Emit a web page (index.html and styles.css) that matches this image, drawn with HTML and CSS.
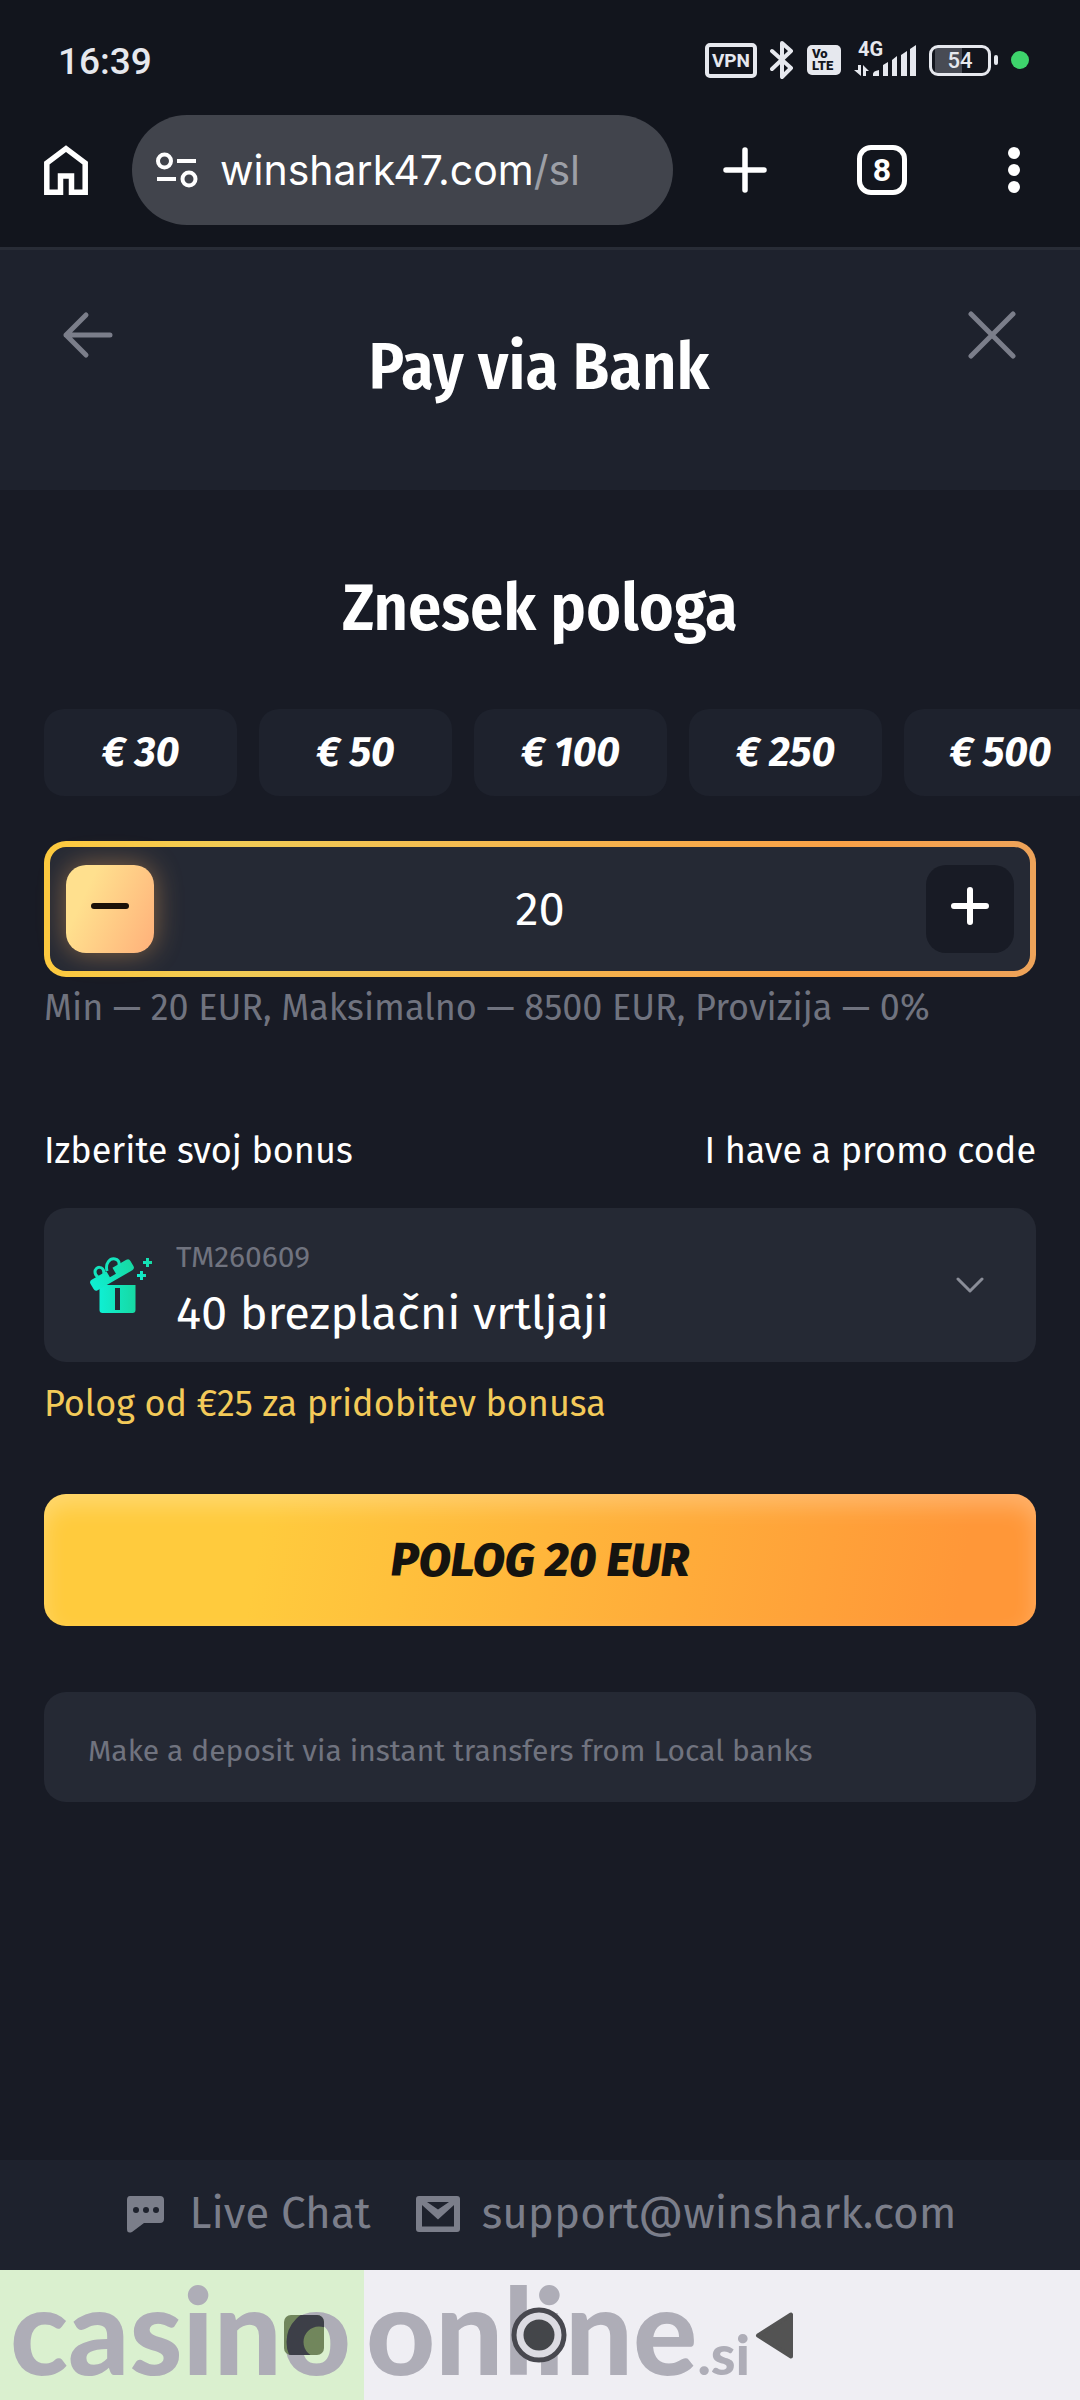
FILE: index.html
```html
<!DOCTYPE html>
<html lang="sl">
<head>
<meta charset="utf-8">
<meta name="viewport" content="width=device-width, initial-scale=1">
<title>Pay via Bank</title>
<link rel="stylesheet" href="styles.css">
</head>
<body>
<div class="chrome">
  <div class="status">
    <time class="clock">16:39</time>
    <div class="indicators">
      <span class="vpn">VPN</span>
      <svg width="24" height="40" viewBox="0 0 24 40" fill="none" stroke="#e6e8ee" stroke-width="4" stroke-linejoin="round" stroke-linecap="round"><path d="M2 11 21 28 12 37V3l9 8L2 29"/></svg>
      <span class="volte"><span>Vo</span><span>LTE</span></span>
      <span class="signal">
        <span class="net">4G</span>
        <svg width="62" height="32" viewBox="0 0 62 32" fill="#e6e8ee"><path d="M4 21h3v11L0 26h4zM9 32V21l6 6h-3v5zM19 30q0-3 6-4v6h-6zM29 21l5-3v14h-5zM38 16l5-4v20h-5zM47 11l6-4v25h-6zM56 5l6-4v31h-6z"/></svg>
      </span>
      <span class="battery"><span class="cell">54</span><span class="nub"></span></span>
      <span class="dot"></span>
    </div>
  </div>
  <div class="toolbar">
    <button class="icon-btn" aria-label="Home"><svg width="44" height="50" viewBox="0 0 44 50" fill="none" stroke="#fff" stroke-width="5.5"><path d="M2.8 47.2V18L22 3.6 41.2 18v29.200H27.500V31h-11v16.200z"/></svg></button>
    <div class="address">
      <svg width="42" height="36" viewBox="0 0 42 36" fill="none" stroke="#fff" stroke-width="4"><circle cx="8.500" cy="9" r="6.500"/><circle cx="33" cy="27" r="6.500"/><path d="M21 9h19M1 27h19"/></svg>
      <span class="url">winshark47.com<span class="path">/sl</span></span>
    </div>
    <div class="actions">
      <button class="icon-btn" aria-label="New tab"><svg width="44" height="46" viewBox="0 0 44 46" stroke="#fff" stroke-width="5.500" stroke-linecap="round"><path d="M3 23h38M22 3v40"/></svg></button>
      <button class="tabs" aria-label="Tabs">8</button>
      <button class="icon-btn" aria-label="Menu"><svg width="34" height="48" viewBox="0 0 34 48" fill="#fff"><circle cx="17" cy="7" r="6"/><circle cx="17" cy="24" r="6"/><circle cx="17" cy="41" r="6"/></svg></button>
    </div>
  </div>
</div>

<header class="header">
  <button class="icon-btn" aria-label="Back"><svg width="52" height="48" viewBox="0 0 52 48" fill="none" stroke="#7b7e8a" stroke-width="5" stroke-linecap="round" stroke-linejoin="round"><path d="M48 24H4M24 4 4 24l20 20"/></svg></button>
  <h1 class="title">Pay via Bank</h1>
  <button class="icon-btn" aria-label="Close"><svg width="48" height="48" viewBox="0 0 48 48" stroke="#7b7e8a" stroke-width="5" stroke-linecap="round"><path d="M3 3l42 42M45 3 3 45"/></svg></button>
</header>

<main class="main">
  <h2 class="title">Znesek pologa</h2>
  <div class="chips">
    <button class="chip">€ 30</button>
    <button class="chip">€ 50</button>
    <button class="chip">€ 100</button>
    <button class="chip">€ 250</button>
    <button class="chip">€ 500</button>
  </div>
  <div class="amount">
    <button class="step step-minus" aria-label="Manj"><svg width="40" height="40" viewBox="0 0 40 40" stroke="#1b1108" stroke-width="6" stroke-linecap="round"><path d="M4 20h32"/></svg></button>
    <input class="value" type="text" inputmode="numeric" value="20" aria-label="Znesek pologa">
    <button class="step" aria-label="Več"><svg width="40" height="40" viewBox="0 0 40 40" stroke="#fff" stroke-width="6" stroke-linecap="round"><path d="M4 20h32M20 4v32"/></svg></button>
  </div>
  <p class="text hint">Min — 20 EUR, Maksimalno — 8500 EUR, Provizija — 0%</p>
  <div class="text bonus-head">
    <label for="bonus">Izberite svoj bonus</label>
    <a class="promo" href="#promo">I have a promo code</a>
  </div>
  <div class="bonus">
    <svg width="62" height="56" viewBox="0 0 62 56">
      <defs><linearGradient id="mint" x1="0" x2="1"><stop offset="0" stop-color="#0fefd3"/><stop offset="1" stop-color="#17d9a3"/></linearGradient></defs>
      <g fill="url(#mint)">
        <path d="M9.500 28h36v25a3 3 0 0 1-3 3h-30a3 3 0 0 1-3-3zm15.500 3v22h5V31z"/>
        <path transform="translate(22 18) rotate(-30)" d="M-20-6h17v7h7v-7h16a3 3 0 0 1 3 3v6a3 3 0 0 1-3 3h-40a3 3 0 0 1-3-3v-6a3 3 0 0 1 3-3z"/>
        <path d="M56 1h3v3h3v3h-3v3h-3V7h-3V4h3zM50 14h3v3h3v3h-3v3h-3v-3h-3v-3h3z"/>
      </g>
      <path d="M14 17C14 8 5 9 5 15q0 3 3 5M17 14C15 6 20 1 25 2q5 1 4 7" fill="none" stroke="#14e3bd" stroke-width="3"/>
    </svg>
    <div class="bonus-body">
      <span class="code">TM260609</span>
      <select class="bonus-select" id="bonus"><option>40 brezplačni vrtljaji</option></select>
    </div>
    <svg width="28" height="16" viewBox="0 0 28 16" fill="none" stroke="#8a8d98" stroke-width="3" stroke-linecap="round" stroke-linejoin="round"><path d="M2 2l12 12L26 2"/></svg>
  </div>
  <p class="text warning">Polog od €25 za pridobitev bonusa</p>
  <button class="submit">POLOG 20 EUR</button>
  <p class="info">Make a deposit via instant transfers from Local banks</p>
</main>

<footer class="footer">
  <a class="contact" href="#chat"><svg width="44" height="38" viewBox="0 0 44 38"><path fill="#7b7e8a" d="M7 1h30a4 4 0 0 1 4 4v19a4 4 0 0 1-4 4H21L9 37q-5 2-5-3V5q0-4 3-4z"/><g fill="#1e222d"><circle cx="13" cy="15" r="3"/><circle cx="23" cy="15" r="3"/><circle cx="33" cy="15" r="3"/></g></svg>Live Chat</a>
  <a class="contact" href="mailto:support@winshark.com"><svg width="44" height="38" viewBox="0 0 44 38"><rect x="0" y="1" width="44" height="36" rx="3" fill="#7b7e8a"/><path fill="#1e222d" d="M11 7h22L22 14.500zM6 10l16 14.500L38 10v21.500H6z"/></svg>support@winshark.com</a>
</footer>

<nav class="system">
  <div class="watermark"><span class="casino">casino</span><span class="online">online<span class="si">.si</span></span></div>
  <button class="icon-btn" aria-label="Recent"><svg width="58" height="58" viewBox="0 0 58 58"><defs><clipPath id="sq"><rect x="8" y="8" width="40" height="40" rx="7"/></clipPath></defs><g clip-path="url(#sq)"><rect width="58" height="58" fill="#71865c"/><circle cx="43" cy="35" r="24" fill="none" stroke="#3d3f48" stroke-width="17"/></g></svg></button>
  <button class="icon-btn" aria-label="Home screen"><svg width="58" height="58" viewBox="0 0 58 58"><circle cx="28" cy="28" r="25" fill="#dcdbe2" stroke="#48484f" stroke-width="5"/><circle cx="28" cy="28" r="15.500" fill="#44464a"/></svg></button>
  <button class="icon-btn" aria-label="Go back"><svg width="58" height="58" viewBox="0 0 58 58"><path d="M12 28.500 45 7.500v42z" fill="#535353" stroke="#535353" stroke-width="4" stroke-linejoin="round"/></svg></button>
</nav>
</body>
</html>
```
FILE: styles.css
```css
* { box-sizing: border-box; }

body {
  margin: 0;
  min-height: 100vh;
  display: flex;
  flex-direction: column;
  overflow-x: hidden;
  background: #181b25;
  color: #fff;
  font-family: "Fira Sans", "Noto Sans", sans-serif;
}

h1, h2, p { margin: 0; }
a { color: inherit; text-decoration: none; }
svg { display: block; flex: none; }

button {
  border: 0;
  padding: 0;
  background: none;
  color: inherit;
  font: inherit;
  flex: none;
}

.icon-btn { display: block; }

/* Device status bar and browser toolbar */
.chrome {
  background: #12151d;
  border-bottom: 3px solid #282c36;
  font-family: Roboto, sans-serif;
}

.status {
  display: flex;
  justify-content: space-between;
  align-items: center;
  height: 115px;
  padding: 0 51px 0 58px;
}

.clock { font-size: 37px; font-weight: 500; line-height: 44px; color: #e6e8ee; padding-top: 8px; }
.indicators { display: flex; align-items: center; gap: 13px; color: #e6e8ee; padding-top: 5px; }

.vpn {
  width: 52px;
  border: 4px solid #e6e8ee;
  border-radius: 5px;
  font-size: 19px;
  font-weight: 700;
  line-height: 27px;
  text-align: center;
}

.volte {
  display: flex;
  flex-direction: column;
  width: 34px;
  height: 30px;
  padding: 3px 5px;
  border-radius: 5px;
  background: #e6e8ee;
  color: #12151d;
  font-size: 13px;
  font-weight: 900;
  line-height: 12px;
}

.signal { position: relative; }
.net { position: absolute; left: 4px; top: -7px; font-size: 20px; font-weight: 700; line-height: 24px; }

.battery { display: flex; align-items: center; gap: 3px; }

.cell {
  width: 62px;
  border: 3px solid #e6e8ee;
  border-radius: 9px;
  background: linear-gradient(90deg, transparent 3px, #484b54 3px, #484b54 30px, transparent 30px);
  font-size: 22px;
  font-weight: 500;
  line-height: 25px;
  text-align: center;
}

.nub { width: 4px; height: 10px; border-radius: 2px; background: #e6e8ee; }
.dot { width: 18px; height: 18px; border-radius: 50%; background: #3ed36c; }

.toolbar { display: flex; align-items: center; padding: 0 49px 22px 44px; }

.address {
  flex: 1;
  min-width: 0;
  display: flex;
  align-items: center;
  gap: 22px;
  height: 110px;
  margin: 0 50px 0 44px;
  padding: 0 24px;
  border-radius: 55px;
  background: #41444c;
}

.url { font-family: "Google Sans", "Product Sans", Inter, sans-serif; font-size: 41px; line-height: 50px; white-space: nowrap; }
.path { color: #9c9fa6; }
.actions { display: flex; align-items: center; gap: 90px; }

.tabs {
  width: 50px;
  height: 50px;
  border: 5px solid #fff;
  border-radius: 14px;
  font-size: 32px;
  font-weight: 700;
  line-height: 40px;
}

/* Cashier header */
.header {
  display: grid;
  grid-template-columns: 1fr auto 1fr;
  align-items: start;
  padding: 61px 64px 87px 62px;
  background: #1e222d;
}

.header .icon-btn:last-child { justify-self: end; }
.header .title { padding-top: 20px; }

.title {
  font-family: "Fira Sans Condensed", "Fira Sans", Lato, sans-serif;
  font-size: 66px;
  font-weight: 600;
  line-height: 72px;
  text-align: center;
}

/* Deposit form */
.main {
  flex: 1;
  display: flex;
  flex-direction: column;
  padding: 82px 44px 60px;
}

.text { font-size: 36px; line-height: 46px; }

.chips { display: flex; gap: 22px; margin: 65px -44px 45px 0; overflow: hidden; }

.chip {
  width: 193px;
  height: 87px;
  border-radius: 20px;
  background: #1e222d;
  font-size: 41px;
  font-style: italic;
  font-weight: 700;
}

.amount {
  display: flex;
  align-items: center;
  padding: 18px 16px;
  border: 6px solid transparent;
  border-radius: 22px;
  background: linear-gradient(#252934, #252934) padding-box, linear-gradient(90deg, #fdca3f, #f1cb55 20%, #f9a147 80%, #eda35a) border-box;
}

.step {
  display: grid;
  place-items: center;
  width: 88px;
  height: 88px;
  padding-bottom: 6px;
  border-radius: 20px;
  background: #181b25;
}

.step-minus {
  background: linear-gradient(115deg, #ffe08e 25%, #ffb07a);
  box-shadow: 0 0 28px rgba(255, 176, 90, 0.45);
}

.value {
  flex: 1;
  min-width: 0;
  border: 0;
  padding: 0;
  background: none;
  color: #fff;
  font: 47px/60px "Fira Sans", "Noto Sans", sans-serif;
  text-align: center;
}

.hint { margin-top: 8px; color: #70737f; }

.bonus-head { display: flex; justify-content: space-between; margin: 97px 0 34px; }

.bonus {
  display: flex;
  align-items: center;
  gap: 24px;
  padding: 20px 52px 20px 46px;
  border-radius: 22px;
  background: #252934;
}

.bonus-body { flex: 1; min-width: 0; display: flex; flex-direction: column; padding-top: 2px; }
.code { color: #70737f; font-size: 30px; line-height: 54px; }

.bonus-select {
  appearance: none;
  width: 100%;
  border: 0;
  padding: 0;
  background: none;
  color: #fff;
  font: 47px/58px "Fira Sans", "Noto Sans", sans-serif;
}

.warning { margin-top: 19px; color: #f3ca59; }

.submit {
  height: 132px;
  margin-top: 67px;
  border-radius: 22px;
  background: linear-gradient(100deg, #ffcb3d 22%, #ff9738 92%);
  box-shadow: inset 0 12px 22px rgba(255, 255, 255, 0.25);
  color: #16140f;
  font-size: 47px;
  font-style: italic;
  font-weight: 800;
}

.info {
  margin-top: 66px;
  padding: 39px 44px 31px;
  border-radius: 22px;
  background: #252934;
  color: #70737f;
  font-size: 30px;
  line-height: 40px;
}

.footer {
  display: flex;
  justify-content: center;
  gap: 45px;
  padding: 25px 0 27px;
  background: #1e222d;
  color: #7b7e8a;
  font-size: 44px;
  line-height: 58px;
}

.contact { display: flex; align-items: center; gap: 22px; }

/* Device navigation bar with the site watermark behind it */
.system {
  position: relative;
  display: flex;
  justify-content: center;
  gap: 177px;
  height: 130px;
  padding: 37px 0;
  background: #efeef3;
}

.system .icon-btn { position: relative; }

.watermark {
  position: absolute;
  inset: 0;
  display: flex;
  color: #aeadb7;
  font: 900 120px/118px Lato, sans-serif;
}

.casino { width: 364px; padding-left: 10px; background: #daf0cf; }
.online { padding-left: 2px; }
.si { font-size: 56px; }
```
